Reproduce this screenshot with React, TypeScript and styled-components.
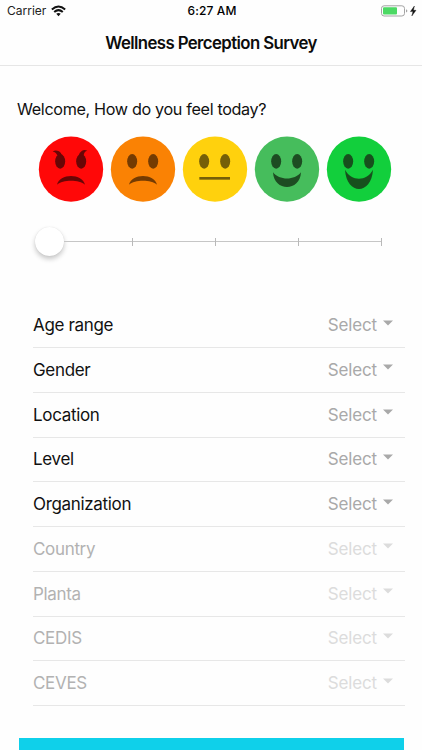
import React from "react";
import styled, { createGlobalStyle } from "styled-components";

const GlobalStyle = createGlobalStyle`
  html, body { margin: 0; background: #fefefe; }
  body { overflow: hidden; }
`;

const Screen = styled.div`
  width: 422px;
  height: 750px;
  display: flex;
  flex-direction: column;
  overflow: hidden;
  background: #fefefe;
  color: #111;
  font-family: Inter, "Liberation Sans", sans-serif;
`;

const StatusBar = styled.div`
  height: 22px;
  flex: none;
  display: grid;
  grid-template-columns: 1fr auto 1fr;
  align-items: center;
  padding: 0 5px 0 7px;
`;

const Carrier = styled.div`
  display: flex;
  align-items: center;
  gap: 5px;
  font-size: 12px;
  line-height: 22px;
  color: #222;
`;

const Clock = styled.div`
  font-size: 12px;
  font-weight: 500;
  line-height: 22px;
  letter-spacing: 0.15px;
  color: #000;
`;

const Power = styled.div`
  display: flex;
  justify-content: flex-end;
  align-items: center;
`;

const Header = styled.header`
  height: 43px;
  flex: none;
  border-bottom: 1px solid #e6e6e6;
  display: flex;
  justify-content: center;
`;

const Title = styled.h1`
  margin: 0;
  font-size: 16.8px;
  font-weight: 600;
  line-height: 43px;
  letter-spacing: -0.6px;
  color: #0c0c0c;
`;

const Question = styled.p`
  margin: 30px 0 0 17px;
  font-size: 16.2px;
  line-height: 26px;
  height: 26px;
  letter-spacing: -0.35px;
  white-space: nowrap;
`;

const Faces = styled.div`
  display: flex;
  margin: 11px 0 0 35px;
`;

const FaceIcon = styled.svg`
  display: block;
  width: 72px;
  height: 72px;
`;

const Slider = styled.div`
  display: flex;
  align-items: center;
  height: 30px;
  margin: 22px 40px 0 34.5px;
`;

const Thumb = styled.div`
  flex: none;
  width: 29px;
  height: 29px;
  border-radius: 50%;
  background: #fff;
  box-shadow: 0 3px 5px rgba(0, 0, 0, 0.22), 0 0 1px rgba(0, 0, 0, 0.12);
`;

const Rail = styled.div`
  flex: 1;
  height: 8px;
  margin-top: 1px;
  display: flex;
  justify-content: flex-end;
  background: linear-gradient(#c6c6c6, #c6c6c6) 0 3px / 100% 1.4px no-repeat;
`;

const Segment = styled.div<{ $width: number }>`
  box-sizing: border-box;
  width: ${(p) => p.$width}px;
  border-right: 1px solid #b9b9b9;
`;

const List = styled.div`
  margin: 47.25px 17px 0 33px;
`;

const Row = styled.div<{ $disabled: boolean }>`
  box-sizing: border-box;
  height: 44.75px;
  border-bottom: 1px solid #e7e7e7;
  display: flex;
  justify-content: space-between;
  align-items: center;
  padding-right: 12px;
  font-size: 17px;
  line-height: 44px;
  letter-spacing: -0.33px;
  color: ${(p) => (p.$disabled ? "#b2b2b2" : "#111")};
`;

const Picker = styled.div<{ $disabled: boolean }>`
  display: flex;
  align-items: center;
  gap: 6px;
  letter-spacing: -0.15px;
  color: ${(p) => (p.$disabled ? "#dcdcdc" : "#a9a9a9")};
`;

const Caret = styled.svg`
  width: 10px;
  height: 6px;
  margin-bottom: 5px;
  fill: currentColor;
`;

const SubmitBar = styled.div`
  flex: none;
  height: 44px;
  margin: 32px 18px 0 19px;
  background: #0fd0ea;
`;

const angry = (
  <>
    <path d="M56 59 Q64 52 75 58 Q82 62 84 71 L70 70 Q66 60 56 59Z" stroke="none" />
    <path d="M160 56 Q151 52 144 56 Q136 61 134 71 L149 70 Q150 58 160 56Z" stroke="none" />
  </>
);
const frown = <path d="M69 158 C76 123 146 123 153 158 C136 142 86 142 69 158Z" stroke="none" />;
const flat = <path d="M64 139 H156" fill="none" strokeWidth="8" />;
const smile = <path d="M69 121 C88 146 134 146 153 121 C150 180 72 180 69 121Z" stroke="none" />;
const grin = <path d="M69 113 C88 149 134 149 153 113 C148 190 74 190 69 113Z" stroke="none" />;

const faces = [
  { name: "Angry", fill: "#ff0808", ink: "#690606", shape: <>{angry}{frown}</> },
  { name: "Sad", fill: "#fa8204", ink: "#743b02", shape: frown },
  { name: "Neutral", fill: "#ffd10d", ink: "#755f08", shape: flat },
  { name: "Happy", fill: "#46bd5c", ink: "#1d4c22", shape: smile },
  { name: "Very happy", fill: "#12cf3c", ink: "#17501d", shape: grin },
];

const rows = [
  { label: "Age range", disabled: false },
  { label: "Gender", disabled: false },
  { label: "Location", disabled: false },
  { label: "Level", disabled: false },
  { label: "Organization", disabled: false },
  { label: "Country", disabled: true },
  { label: "Planta", disabled: true },
  { label: "CEDIS", disabled: true },
  { label: "CEVES", disabled: true },
];

export default function App() {
  return (
    <>
      <GlobalStyle />
      <Screen>
        <StatusBar>
          <Carrier>
            Carrier
            <svg width="15" height="12" viewBox="0 0 14 11" fill="none" stroke="#111" strokeWidth="1.9">
              <path d="M.8 4 Q7 -1.4 13.2 4" />
              <path d="M3 6.4 Q7 3 11 6.4" />
              <path d="M4.9 8.1 Q7 6.4 9.1 8.1 L7 10.3Z" fill="#111" stroke="none" />
            </svg>
          </Carrier>
          <Clock>6:27 AM</Clock>
          <Power>
            <svg width="36" height="12" viewBox="0 0 36 12">
              <rect x=".5" y=".8" width="23" height="10.2" rx="2.6" fill="none" stroke="#a3a3a3" />
              <rect x="2" y="2.3" width="14" height="7.2" rx="1" fill="#4cd964" />
              <path d="M25 4.2 Q26.4 5 26.4 5.9 Q26.4 6.8 25 7.6Z" fill="#a3a3a3" />
              <path d="M33.4 1 L29.4 6.6 H32 L30.8 11 L35 5.3 H32.4Z" fill="#111" stroke="#111" strokeWidth=".4" />
            </svg>
          </Power>
        </StatusBar>
        <Header>
          <Title>Wellness Perception Survey</Title>
        </Header>
        <Question>Welcome, How do you feel today?</Question>
        <Faces>
          {faces.map((f) => (
            <FaceIcon key={f.name} viewBox="3 3 216 216" fill={f.ink} stroke={f.ink} aria-label={f.name}>
              <ellipse cx="111" cy="111.5" rx="96.5" ry="98" fill={f.fill} stroke="none" />
              <ellipse cx="78.5" cy="88" rx="15" ry="22" stroke="none" />
              <ellipse cx="141.5" cy="88" rx="15" ry="22" stroke="none" />
              {f.shape}
            </FaceIcon>
          ))}
        </Faces>
        <Slider>
          <Thumb />
          <Rail>
            {[68, 83, 83, 83].map((w, i) => (
              <Segment key={i} $width={w} />
            ))}
          </Rail>
        </Slider>
        <List>
          {rows.map((r) => (
            <Row key={r.label} $disabled={r.disabled}>
              {r.label}
              <Picker $disabled={r.disabled}>
                Select
                <Caret viewBox="0 0 10 6">
                  <path d="M0 .4 H10 L5 5.6Z" />
                </Caret>
              </Picker>
            </Row>
          ))}
        </List>
        <SubmitBar />
      </Screen>
    </>
  );
}
